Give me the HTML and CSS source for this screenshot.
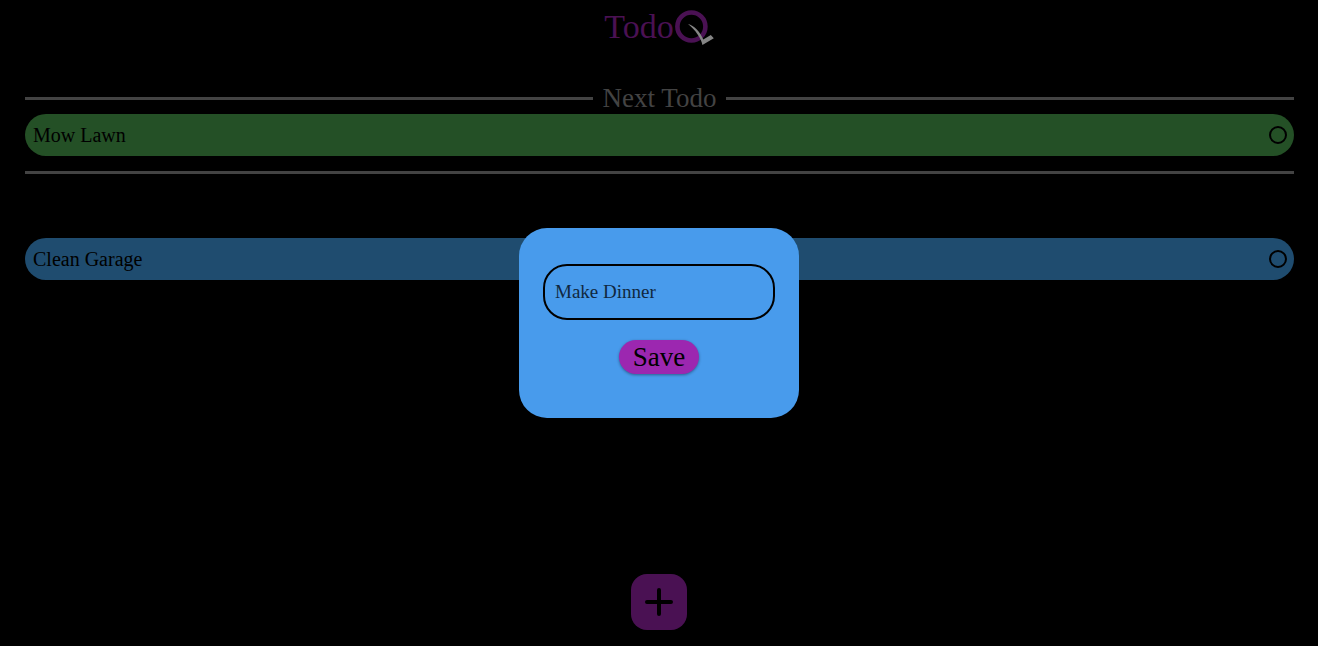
FILE: index.html
```html
<!DOCTYPE html>
<html lang="en">
<head>
<meta charset="utf-8">
<meta name="viewport" content="width=device-width, initial-scale=1">
<title>TodoQ</title>
<link rel="stylesheet" href="styles.css">
</head>
<body>
<div class="app">
  <header class="header">
    <h1 class="logo" aria-label="TodoQ">
      <span>Todo</span>
      <svg class="logo-mark" viewBox="0 0 40 36" aria-hidden="true">
        <circle cx="17.400" cy="17.500" r="14" fill="none" stroke="#4a1153" stroke-width="4.600"/>
        <path d="M14 15C20 16.200 26.500 23.500 29.300 30.600L36.800 26L39.800 29.200L28.400 36C27.500 29.500 21 20.500 14 15Z" fill="#858585"/>
      </svg>
    </h1>
  </header>
  <main class="content">
    <section class="next">
      <h2 class="next-title">Next Todo</h2>
      <label class="todo todo-next"><span>Mow Lawn</span><input class="check" type="checkbox"></label>
    </section>
    <ul class="list">
      <li><label class="todo"><span>Clean Garage</span><input class="check" type="checkbox"></label></li>
    </ul>
  </main>
  <footer class="footer">
    <button class="add" type="button" aria-label="Add todo">
      <svg class="add-icon" viewBox="0 0 28 28" aria-hidden="true"><path d="M14 2V26M2 14H26" stroke="#000" stroke-width="4" stroke-linecap="round"/></svg>
    </button>
  </footer>
</div>
<div class="overlay">
  <form class="dialog" role="dialog" aria-label="New todo">
    <input class="field" type="text" aria-label="Todo" value="Make Dinner">
    <button class="save" type="button">Save</button>
  </form>
</div>
</body>
</html>
```
FILE: styles.css
```css
* {
  box-sizing: border-box;
}

body {
  margin: 0;
  background: #000;
  color: #000;
  font-family: "Liberation Serif", serif;
}

.app {
  display: flex;
  flex-direction: column;
  min-height: 100vh;
  padding: 8px 24px 16px;
}

.header {
  display: flex;
  justify-content: center;
}

.logo {
  display: flex;
  align-items: center;
  margin: 0;
  color: #4a1153;
  font-size: 34px;
  font-weight: 400;
  line-height: 38px;
}

.logo-mark {
  width: 40px;
  height: 36px;
}

.content {
  flex: 1;
  padding: 36px 0 0 1px;
}

.next {
  padding-bottom: 15px;
  border-bottom: 3px solid #434343;
}

.next-title {
  display: flex;
  align-items: center;
  gap: 10px;
  margin: 0;
  color: #434343;
  font-size: 27px;
  font-weight: 400;
  line-height: 32px;
}

.next-title::before,
.next-title::after {
  content: "";
  flex: 1;
  height: 3px;
  background: #434343;
}

.todo {
  display: flex;
  align-items: center;
  justify-content: space-between;
  height: 42px;
  padding: 0 7px 0 8px;
  border-radius: 21px;
  background: #1f4c6f;
  font-size: 20px;
}

.todo-next {
  background: #245026;
}

.check {
  appearance: none;
  width: 18px;
  height: 18px;
  margin: 0;
  border: 2px solid #000;
  border-radius: 50%;
}

.list {
  margin: 64px 0 0;
  padding: 0;
  list-style: none;
}

.footer {
  display: flex;
  justify-content: center;
}

.add {
  display: flex;
  align-items: center;
  justify-content: center;
  width: 56px;
  height: 56px;
  padding: 0;
  border: 0;
  border-radius: 16px;
  background: #4a1153;
}

.add-icon {
  width: 28px;
  height: 28px;
}

.overlay {
  position: fixed;
  inset: 0;
  display: flex;
  align-items: center;
  justify-content: center;
}

.dialog {
  display: flex;
  flex-direction: column;
  align-items: center;
  gap: 20px;
  width: 280px;
  padding: 36px 24px 44px;
  border-radius: 28px;
  background: #489bec;
}

.field {
  width: 100%;
  height: 56px;
  padding: 0 10px;
  border: 2px solid #000;
  border-radius: 24px;
  background: transparent;
  color: #10283f;
  font: 19px "Liberation Serif", serif;
}

.save {
  height: 34px;
  padding: 0 14px;
  border: 0;
  border-radius: 17px;
  background: #9c27b0;
  box-shadow: 0 1px 3px rgba(0, 0, 0, 0.4);
  color: #000;
  font: 27px "Liberation Serif", serif;
}
```
